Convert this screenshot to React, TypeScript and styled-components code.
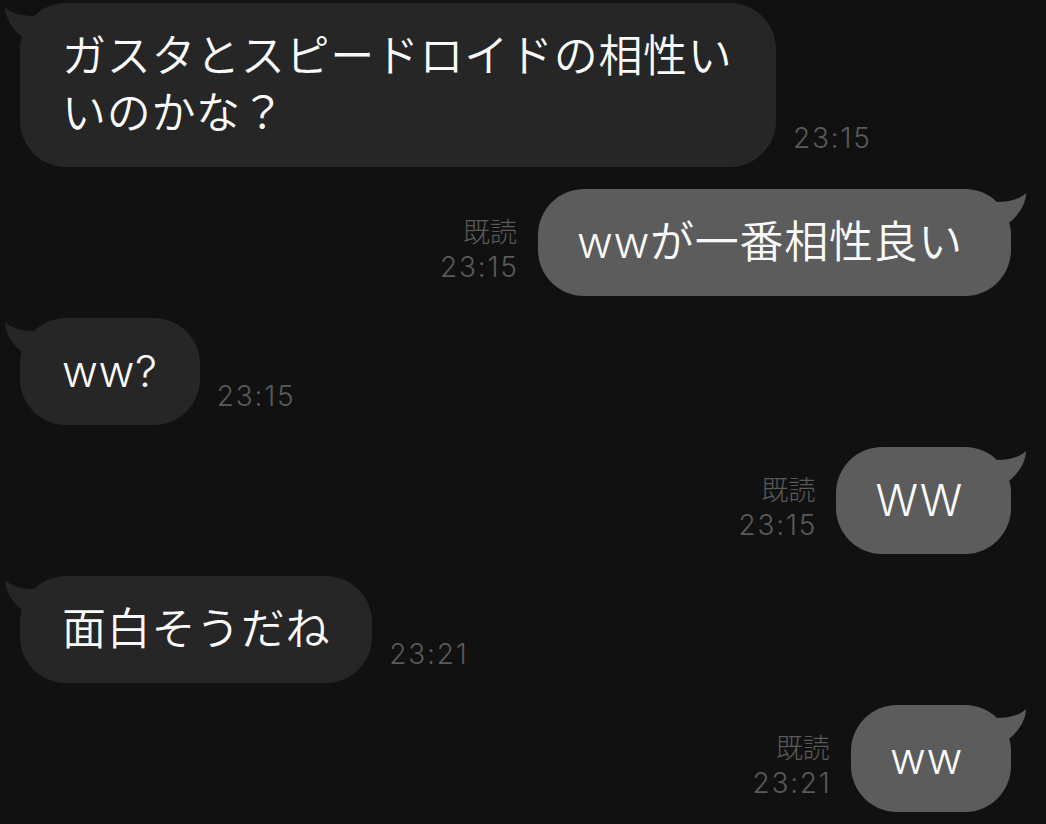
import React from 'react';
import styled, { createGlobalStyle } from 'styled-components';

const GlobalStyle = createGlobalStyle`
  html, body {
    margin: 0;
    padding: 0;
    background: #111111;
  }
  body {
    font-family: "Inter", "Noto Sans CJK JP", sans-serif;
    overflow: hidden;
  }
`;

const Page = styled.div`
  min-height: 100vh;
  background: #111111;
  padding: 3px 35px 0 20px;
  box-sizing: border-box;
  display: flex;
  flex-direction: column;
  gap: 22px;
`;

const Row = styled.div<{ $out?: boolean }>`
  display: flex;
  align-items: flex-end;
  justify-content: ${(p) => (p.$out ? 'flex-end' : 'flex-start')};
  gap: ${(p) => (p.$out ? '21px' : '17px')};
`;

const Bubble = styled.div<{ $out?: boolean }>`
  position: relative;
  max-width: 756px;
  box-sizing: border-box;
  padding: ${(p) => (p.$out ? '25px 48px 25px 39px' : '25px 42px 25px 42px')};
  border-radius: 46px;
  background: ${(p) => (p.$out ? '#5c5c5c' : '#262626')};
  color: #fafafa;
  font-family: "Inter", "Noto Sans CJK JP", sans-serif;
  font-size: 44px;
  font-weight: 350;
  letter-spacing: 0.7px;
  line-height: 57px;
`;

const Tail = styled.svg<{ $out?: boolean }>`
  position: absolute;
  top: 0;
  ${(p) => (p.$out ? 'right: -16px; transform: scaleX(-1);' : 'left: -16px;')}
  width: 40px;
  height: 40px;
  overflow: visible;
`;

const Meta = styled.div<{ $out?: boolean }>`
  margin-bottom: 11px;
  color: #5a5a5a;
  font-family: "Inter", "Noto Sans CJK JP", sans-serif;
  font-size: 27px;
  font-weight: 300;
  line-height: 35px;
  text-align: ${(p) => (p.$out ? 'right' : 'left')};
  white-space: nowrap;
`;

const ReadLabel = styled.div`
  letter-spacing: 0;
`;

const Time = styled.div`
  font-size: 28px;
  letter-spacing: 1.8px;
  margin-right: -1.8px;
`;

type Msg = { out?: boolean; text: string; time: string };

const messages: Msg[] = [
  { text: 'ガスタとスピードロイドの相性いいのかな？', time: '23:15' },
  { out: true, text: 'wwが一番相性良い', time: '23:15' },
  { text: 'ww?', time: '23:15' },
  { out: true, text: 'WW', time: '23:15' },
  { text: '面白そうだね', time: '23:21' },
  { out: true, text: 'ww', time: '23:21' },
];

const BubbleTail: React.FC<{ out?: boolean; color: string }> = ({ out, color }) => (
  <Tail $out={out} viewBox="-16 0 40 40">
    <path
      d="M14 13 C4 13 -8 11 -15 4 C-15 14 -8 26 1 33 L22 33 L22 13 Z"
      fill={color}
    />
  </Tail>
);

const Message: React.FC<{ msg: Msg }> = ({ msg }) => {
  const bubble = (
    <Bubble $out={msg.out}>
      <BubbleTail out={msg.out} color={msg.out ? '#5c5c5c' : '#262626'} />
      {msg.text}
    </Bubble>
  );
  if (msg.out) {
    return (
      <Row $out>
        <Meta $out>
          <ReadLabel>既読</ReadLabel>
          <Time>{msg.time}</Time>
        </Meta>
        {bubble}
      </Row>
    );
  }
  return (
    <Row>
      {bubble}
      <Meta>
        <Time>{msg.time}</Time>
      </Meta>
    </Row>
  );
};

const App: React.FC = () => (
  <>
    <GlobalStyle />
    <Page>
      {messages.map((m, i) => (
        <Message key={i} msg={m} />
      ))}
    </Page>
  </>
);

export default App;
